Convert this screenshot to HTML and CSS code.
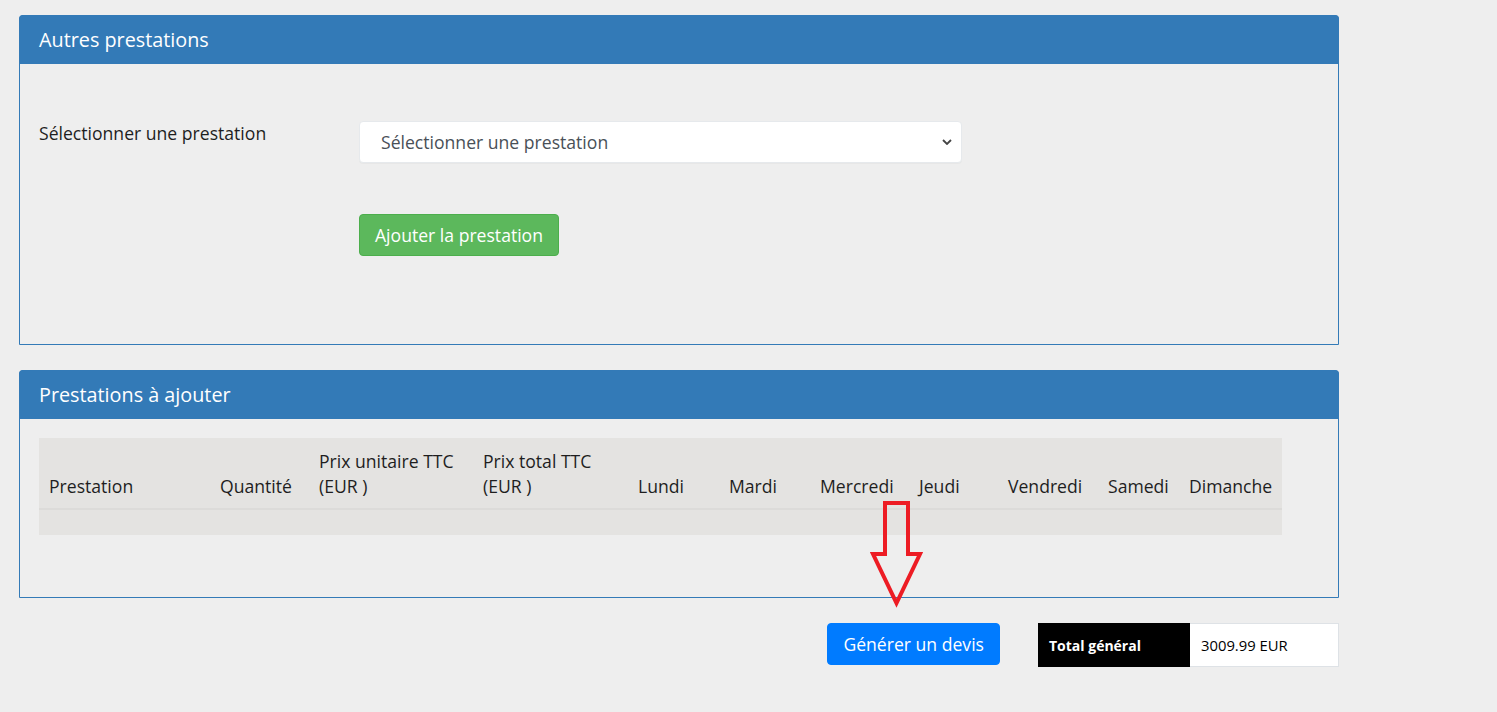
FILE: index.html
```html
<!DOCTYPE html>
<html lang="fr">
<head>
    <meta charset="UTF-8">
    <meta name="viewport" content="width=device-width, initial-scale=1.0">
    <title>Devis - prestations</title>
    <link rel="stylesheet" href="styles.css">
</head>
<body>
    <div class="page">

        <!-- Autres prestations -->
        <div class="panel">
            <div class="panel-heading">Autres prestations</div>
            <div class="panel-body body-form">
                <div class="form-row">
                    <label class="form-label" for="prestation">Sélectionner une prestation</label>
                    <div class="select-wrap">
                        <select id="prestation" class="form-select">
                            <option>Sélectionner une prestation</option>
                        </select>
                        <svg class="select-chevron" width="10" height="6" viewBox="0 0 10 6">
                            <path d="M1 1 L5 5 L9 1" fill="none" stroke="#444" stroke-width="1.8"/>
                        </svg>
                    </div>
                </div>
                <div class="form-actions">
                    <button class="btn btn-success">Ajouter la prestation</button>
                </div>
            </div>
        </div>

        <!-- Prestations à ajouter -->
        <div class="panel">
            <div class="panel-heading">Prestations à ajouter</div>
            <div class="panel-body body-table">
                <table class="table-prestations">
                    <thead>
                        <tr>
                            <th class="c-prest">Prestation</th>
                            <th class="c-qte">Quantité</th>
                            <th class="c-pu">Prix unitaire TTC<br>(EUR )</th>
                            <th class="c-pt">Prix total TTC<br>(EUR )</th>
                            <th class="c-lun">Lundi</th>
                            <th class="c-mar">Mardi</th>
                            <th class="c-mer">Mercredi</th>
                            <th class="c-jeu">Jeudi</th>
                            <th class="c-ven">Vendredi</th>
                            <th class="c-sam">Samedi</th>
                            <th class="c-dim">Dimanche</th>
                        </tr>
                    </thead>
                    <tbody>
                        <tr>
                            <td colspan="11"></td>
                        </tr>
                    </tbody>
                </table>
            </div>
        </div>

        <div class="footer-row">
            <button class="btn btn-primary">Générer un devis</button>
            <table class="total-table">
                <tr>
                    <th>Total général</th>
                    <td>3009.99 EUR</td>
                </tr>
            </table>
        </div>

        <!-- annotation -->
        <svg class="red-arrow" width="56" height="110" viewBox="0 0 56 110">
            <polygon points="16,5 39,5 39,56 51,56 27.5,105 4,56 16,56" fill="none" stroke="#ed1c24" stroke-width="4"/>
        </svg>
    </div>
</body>
</html>
```

FILE: styles.css
```css
body {
    margin: 0;
    font-family: "Open Sans", "Noto Sans", sans-serif;
    background-color: #eeeeee;
    color: #333;
    font-size: 17.6px;
}

.page {
    position: relative;
    width: 1320px;
    padding: 15px 0 40px 19px;
}

.panel {
    border: 1px solid #337ab7;
    border-radius: 4px 4px 0 0;
    margin-bottom: 25px;
    background-color: #eeeeee;
}

.panel-heading {
    background-color: #337ab7;
    color: #fff;
    font-size: 19.8px;
    line-height: 25px;
    padding: 12px 20px 12px 20px;
    margin: -1px -1px 0 -1px;
    border-radius: 4px 4px 0 0;
}

.body-form {
    padding: 57px 19px 88px 19px;
}

.form-row {
    display: flex;
    align-items: flex-start;
}

.form-label {
    width: 320px;
    font-weight: normal;
    line-height: 24px;
    color: #1e1e1e;
}

.select-wrap {
    position: relative;
    width: 603px;
}

.form-select {
    appearance: none;
    -webkit-appearance: none;
    width: 100%;
    height: 42px;
    background-color: #fff;
    border: 1px solid #e6e9ec;
    border-radius: 4px;
    padding: 0 21px;
    font-family: inherit;
    font-size: 17.6px;
    color: #495057;
    box-shadow: 0 1px 1px rgba(0, 0, 0, 0.03);
}

.select-chevron {
    position: absolute;
    right: 10px;
    top: 18px;
    pointer-events: none;
}

.form-actions {
    margin: 51px 0 0 320px;
}

.btn {
    height: 42px;
    font-family: inherit;
    font-size: 17.6px;
    color: #fff;
    border-radius: 4px;
    cursor: pointer;
    white-space: nowrap;
}

.btn-success {
    background-color: #5cb85c;
    border: 1px solid #4cae4c;
    padding: 0 15px;
}

.btn-primary {
    background-color: #007bff;
    border: 1px solid #007bff;
    padding: 0 15px;
}

.body-table {
    padding: 19px 19px 62px 19px;
}

.table-prestations {
    border-collapse: collapse;
    table-layout: fixed;
    width: 1243px;
    background-color: #e4e3e1;
    color: #1e1e1e;
}

.table-prestations th {
    box-sizing: border-box;
    text-align: left;
    font-weight: normal;
    vertical-align: bottom;
    line-height: 25px;
    padding: 11px 10px 9px 10px;
    border-bottom: 2px solid #dcdbd9;
    white-space: nowrap;
}

.table-prestations td {
    height: 25px;
    padding: 0;
}

.c-prest { width: 171px; }
.c-qte { width: 99px; }
.c-pu { width: 164px; }
.c-pt { width: 155px; }
.c-lun { width: 91px; }
.c-mar { width: 91px; }
.c-mer { width: 99px; }
.c-jeu { width: 89px; }
.c-ven { width: 100px; }
.c-sam { width: 81px; }
.c-dim { width: 103px; }

.footer-row {
    display: flex;
    justify-content: flex-end;
    align-items: flex-start;
    gap: 38px;
}

.total-table {
    border-collapse: collapse;
    width: 301px;
    font-size: 14px;
}

.total-table th,
.total-table td {
    height: 42px;
    padding: 0 10px;
    text-align: left;
    line-height: 19px;
}

.total-table th {
    width: 130px;
    background-color: #000;
    color: #fff;
    font-weight: 700;
    border: 1px solid #000;
}

.total-table td {
    background-color: #fff;
    color: #000;
    border: 1px solid #dee2e6;
    padding-left: 11px;
    font-size: 14.8px;
}

.red-arrow {
    position: absolute;
    left: 869px;
    top: 498px;
}
```
